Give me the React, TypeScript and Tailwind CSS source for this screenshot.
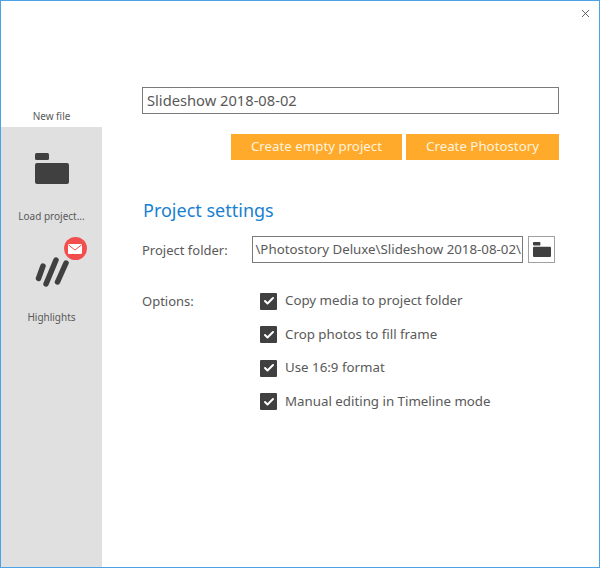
import { Check, X } from "lucide-react";

const options = [
  "Copy media to project folder",
  "Crop photos to fill frame",
  "Use 16:9 format",
  "Manual editing in Timeline mode",
];

function FolderIcon({ className }: { className: string }) {
  return (
    <svg viewBox="0 0 34 31" preserveAspectRatio="none" className={className} fill="#404040">
      <rect x="0" y="0" width="14" height="7" rx="1.5" />
      <rect x="0" y="10" width="34" height="21" rx="2" />
    </svg>
  );
}

function HighlightsIcon() {
  return (
    <svg viewBox="0 0 34 30" className="h-[30px] w-[34px]" stroke="#404040" strokeWidth="5.5" strokeLinecap="round">
      <path d="M3.5 21.5 L8 9" />
      <path d="M11 27 L21 3" />
      <path d="M22.5 25 L31 6" />
    </svg>
  );
}

export default function App() {
  return (
    <div className="flex h-[568px] w-[600px] border border-[#4aa3e6] bg-white font-['Noto_Sans',sans-serif] text-[13.3px] text-[#595959]">
      <aside className="flex w-[101px] shrink-0 flex-col text-[10px]">
        <div className="flex h-[126px] items-end justify-center pb-[3px]">New file</div>
        <div className="flex flex-1 flex-col items-center bg-[#e0e0e0]">
          <FolderIcon className="mt-[26px] h-[31px] w-[34px]" />
          <span className="mt-[25px]">Load project...</span>
          <div className="relative mt-[33px] h-[30px] w-[34px]">
            <HighlightsIcon />
            <div className="absolute -top-[20px] left-[29px] flex h-[23px] w-[23px] items-center justify-center rounded-full bg-[#f24e4e]">
              <svg viewBox="0 0 14 10" className="h-[10px] w-[14px]">
                <rect width="14" height="10" rx="1" fill="white" />
                <path d="M0.5 1 L7 6 L13.5 1" fill="none" stroke="#f24e4e" strokeWidth="1" />
              </svg>
            </div>
          </div>
          <span className="mt-[23px]">Highlights</span>
        </div>
      </aside>

      <main className="relative flex-1 pt-[86px] pl-[40px]">
        <button className="absolute top-[6px] right-[7px] text-[#404040]">
          <X size={13} strokeWidth={1.5} />
        </button>

        <div className="flex h-[27px] w-[417px] items-center border border-[#7a7a7a] px-1 text-[14.7px]">
          Slideshow 2018-08-02
        </div>

        <div className="mt-[20px] flex w-[417px] justify-end gap-1 text-[#fff3df]">
          <div className="flex h-[26px] w-[171px] items-center justify-center bg-[#ffaa2b]">Create empty project</div>
          <div className="flex h-[26px] w-[153px] items-center justify-center bg-[#ffaa2b]">Create Photostory</div>
        </div>

        <h2 className="mt-[37px] pl-px text-[18px] leading-[26px] text-[#1a7fd0]">Project settings</h2>

        <div className="mt-[13px] flex items-center">
          <span className="w-[110px] pt-0.5 text-[13px]">Project folder:</span>
          <div className="flex h-[27px] w-[271px] items-center justify-end overflow-hidden border border-[#7a7a7a] px-px whitespace-nowrap">
            \Photostory Deluxe\Slideshow 2018-08-02\
          </div>
          <div className="ml-[5px] flex h-[27px] w-[27px] items-center justify-center border border-[#a0a0a0]">
            <FolderIcon className="h-[15px] w-[18px]" />
          </div>
        </div>

        <div className="mt-[28px] flex">
          <span className="w-[118px] text-[13px] leading-[20px]">Options:</span>
          <div className="flex flex-col gap-[13.5px]">
            {options.map((o) => (
              <div key={o} className="flex h-5 items-center gap-[8px]">
                <div className="flex h-[17px] w-[17px] items-center justify-center rounded-[1px] bg-[#404040]">
                  <Check size={12} strokeWidth={4} className="text-white" />
                </div>
                <span>{o}</span>
              </div>
            ))}
          </div>
        </div>
      </main>
    </div>
  );
}
